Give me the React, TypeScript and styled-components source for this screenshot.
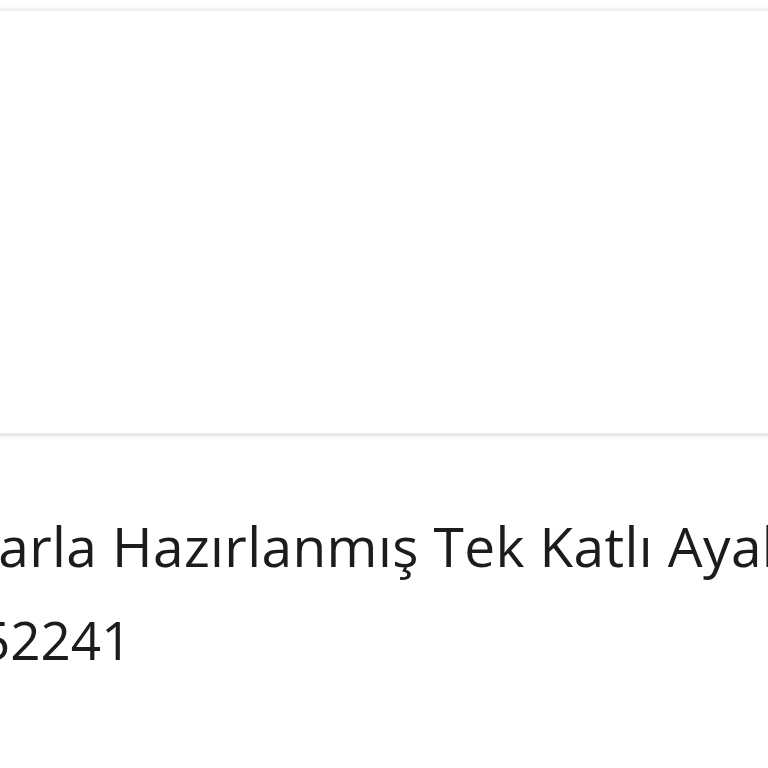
import styled, { createGlobalStyle } from 'styled-components';

const GlobalStyle = createGlobalStyle`
  html, body {
    margin: 0;
    padding: 0;
    background: #ffffff;
    overflow: hidden;
  }
  body {
    font-family: 'Open Sans', 'Noto Sans', sans-serif;
    color: #1f1f1f;
  }
`;

const Card = styled.div<{ $shift: number }>`
  margin-top: 8px;
  margin-left: ${(p) => -p.$shift}px;
  width: 2400px;
  background: #fff;
  border-top: 3px solid #efefef;
  box-shadow: 0 -1px 4px rgba(0, 0, 0, 0.03);
`;

const ImageArea = styled.div`
  height: 422px;
  background: #fff;
  border-bottom: 3px solid #e8e8e8;
  box-shadow: 0 2px 3px rgba(0, 0, 0, 0.03);
`;

const Body = styled.div`
  display: flex;
  flex-direction: column;
  padding: 0 40px;
`;

const Title = styled.h3`
  margin: 75px 0 0;
  font-size: 55px;
  font-weight: 400;
  line-height: 70px;
  letter-spacing: 0.4px;
  white-space: nowrap;
  color: #1c1c1c;
`;

const Code = styled.p`
  margin: 24px 0 0;
  font-size: 53px;
  font-weight: 400;
  line-height: 70px;
  white-space: nowrap;
  color: #1c1c1c;
`;

const App = () => {
  return (
    <>
      <GlobalStyle />
      <Card $shift={217}>
        <ImageArea />
        <Body>
          <Title>Ahşaplarla Hazırlanmış Tek Katlı Ayakkabılık</Title>
          <Code>Kodu: 52241</Code>
        </Body>
      </Card>
    </>
  );
};

export default App;
